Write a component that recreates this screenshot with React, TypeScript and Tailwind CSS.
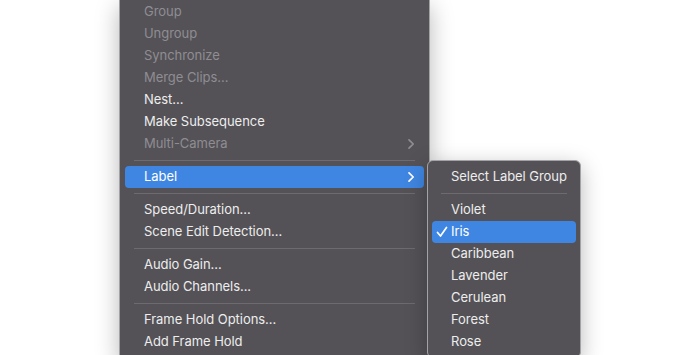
import React from "react";

type Item =
  | { type: "item"; label: string; disabled?: boolean; sub?: boolean; active?: boolean }
  | { type: "sep" };

const mainItems: Item[] = [
  { type: "item", label: "Group", disabled: true },
  { type: "item", label: "Ungroup", disabled: true },
  { type: "item", label: "Synchronize", disabled: true },
  { type: "item", label: "Merge Clips...", disabled: true },
  { type: "item", label: "Nest..." },
  { type: "item", label: "Make Subsequence" },
  { type: "item", label: "Multi-Camera", disabled: true, sub: true },
  { type: "sep" },
  { type: "item", label: "Label", sub: true, active: true },
  { type: "sep" },
  { type: "item", label: "Speed/Duration..." },
  { type: "item", label: "Scene Edit Detection..." },
  { type: "sep" },
  { type: "item", label: "Audio Gain..." },
  { type: "item", label: "Audio Channels..." },
  { type: "sep" },
  { type: "item", label: "Frame Hold Options..." },
  { type: "item", label: "Add Frame Hold" },
];

const subItems: { label: string; checked?: boolean; sep?: boolean }[] = [
  { label: "Select Label Group" },
  { label: "", sep: true },
  { label: "Violet" },
  { label: "Iris", checked: true },
  { label: "Caribbean" },
  { label: "Lavender" },
  { label: "Cerulean" },
  { label: "Forest" },
  { label: "Rose" },
];

function Chevron({ color }: { color: string }) {
  return (
    <svg width="8" height="12" viewBox="0 0 8 12" fill="none">
      <path d="M2 1.8 L6.2 6 L2 10.2" stroke={color} strokeWidth="1.7" strokeLinecap="round" strokeLinejoin="round" />
    </svg>
  );
}

function Check() {
  return (
    <svg width="12" height="12" viewBox="0 0 12 12" fill="none">
      <path d="M1.5 6.5 L4.5 10 L10.5 1.5" stroke="#ffffff" strokeWidth="1.7" strokeLinecap="round" strokeLinejoin="round" />
    </svg>
  );
}

export default function App() {
  return (
    <div
      className="relative w-[700px] h-[355px] overflow-hidden bg-white"
      style={{ fontFamily: "Inter, 'Noto Sans', sans-serif" }}
    >
      <div className="flex pl-[119px]">
        <div className="w-[311px] bg-[#545257] border-x border-b border-[#a3a2a6] shadow-[0_6px_22px_rgba(0,0,0,0.28)] px-[5px] pt-[1px] pb-[5px] text-[13px] tracking-[-0.05px]">
          {mainItems.map((it, i) =>
            it.type === "sep" ? (
              <div key={i} className="h-[11px] flex items-center px-[9px]">
                <div className="h-px w-full bg-[#6d6b70]" />
              </div>
            ) : (
              <div
                key={i}
                className={
                  "h-[22px] flex items-center justify-between pl-[19px] pr-[9px] rounded-[4px] " +
                  (it.active ? "bg-[#3f86e2] text-white" : it.disabled ? "text-[#8f8d92]" : "text-[#ededed]")
                }
              >
                <span>{it.label}</span>
                {it.sub && <Chevron color={it.active ? "#ffffff" : "#8f8d92"} />}
              </div>
            )
          )}
        </div>
      </div>

      <div className="absolute left-[427px] top-[160px] w-[154px] rounded-[6px] bg-[#545257] border border-[#a3a2a6] shadow-[0_6px_22px_rgba(0,0,0,0.28)] px-[4px] pt-[5px] pb-[4px] text-[13px] tracking-[-0.05px]">
        {subItems.map((it, i) =>
          it.sep ? (
            <div key={i} className="h-[11px] flex items-center px-[9px]">
              <div className="h-px w-full bg-[#6d6b70]" />
            </div>
          ) : (
            <div
              key={i}
              className={
                "relative h-[22px] flex items-center pl-[19px] rounded-[4px] " +
                (it.checked ? "bg-[#3f86e2] text-white" : "text-[#ededed]")
              }
            >
              {it.checked && (
                <span className="absolute left-[4px] top-[5px]">
                  <Check />
                </span>
              )}
              <span>{it.label}</span>
            </div>
          )
        )}
      </div>
    </div>
  );
}
